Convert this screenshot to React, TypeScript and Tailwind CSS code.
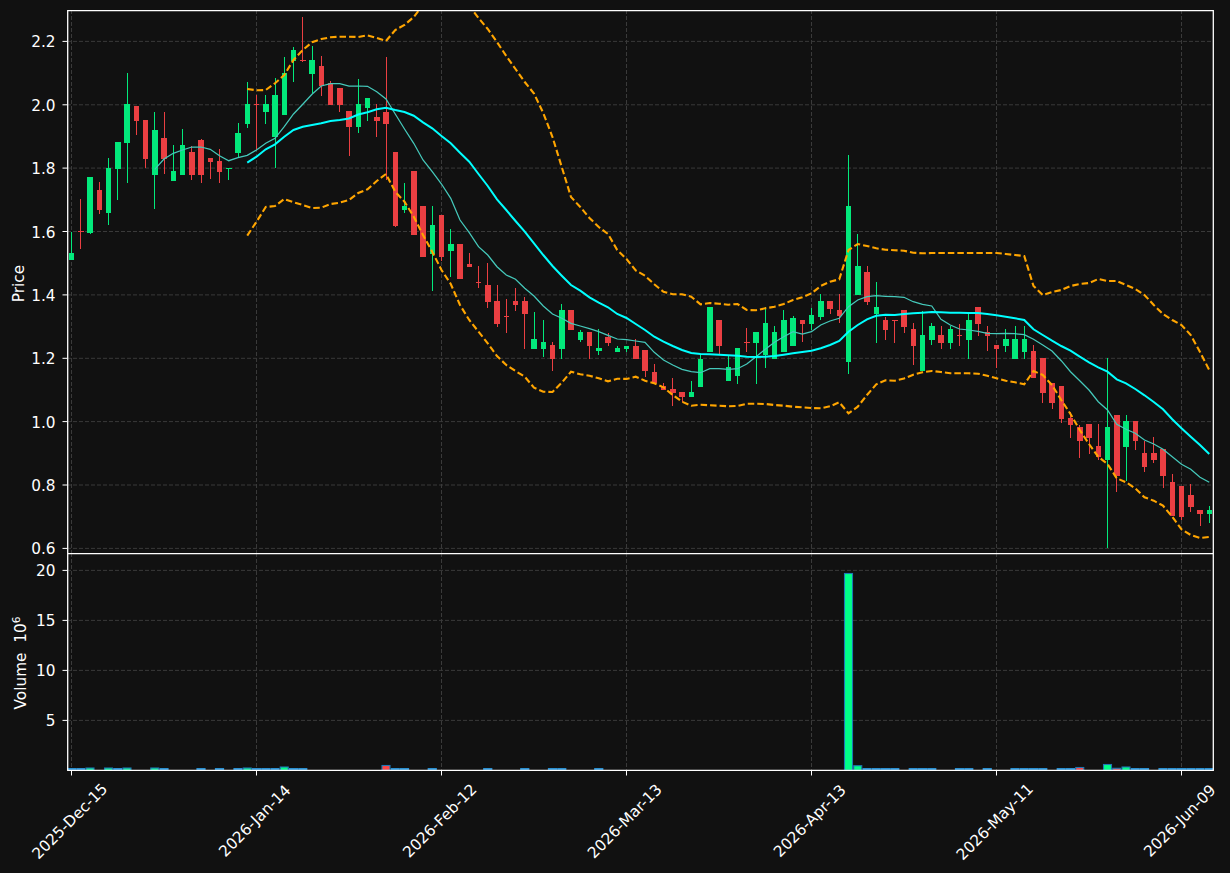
const GREEN = "#02e97b";
const RED = "#ea3f42";

// [high, bodyTop, bodyBottom, low, up?] all in page pixels
const candles: [number, number, number, number, number][] = [
  [231.7, 253, 259.7, 259.7, 1], [199.3, 231, 232, 249.3, 0], [177, 177, 232.7, 234.3, 1], [181.7, 190, 209.7, 213.7, 0],
  [158.3, 168, 212.7, 225.3, 1], [142, 142, 168.7, 199.7, 1], [73.3, 104, 142.7, 183.3, 1], [106, 106, 120.7, 134.7, 0],
  [120, 120, 158.7, 168.3, 0], [111.7, 130, 174.7, 209.3, 1], [111.7, 138, 158.7, 174.3, 0], [145.3, 171.3, 180.7, 180.7, 1],
  [129.3, 145, 174.7, 174.7, 1], [146, 152, 174.7, 180.3, 0], [139.3, 140, 174.7, 183.3, 0], [158, 158, 162, 178.7, 0],
  [149.3, 161, 171.7, 183.3, 0], [168, 168, 168.9, 180.3, 1], [123.3, 133.3, 152.7, 157.3, 1], [82.3, 104, 123.7, 128.3, 1],
  [95.3, 104, 104.9, 150, 0], [95.3, 104, 111.7, 124.3, 1], [77.7, 95, 136.7, 168.3, 1], [57.3, 73.3, 114.7, 114.7, 1],
  [47.3, 50, 61, 82.3, 1], [16.7, 60, 60.9, 62, 0], [45.7, 60, 73.7, 93.3, 1], [56.3, 66, 86, 95.7, 0],
  [80.7, 83.3, 104.7, 104.7, 0], [88, 88, 104.7, 111.7, 0], [111, 111, 126.7, 155.7, 0], [79.3, 104, 126.7, 133.3, 1],
  [98, 98, 108, 120.7, 1], [104.3, 117, 121, 136.7, 0], [57, 111.7, 123.7, 180, 0], [152, 152, 226, 227.3, 0],
  [183.3, 206, 210, 212.7, 1], [171, 171, 234.7, 234.7, 0], [206, 206, 256.7, 256.7, 0], [206, 225, 253.7, 290.7, 1],
  [215, 215, 256.7, 260.7, 0], [229.3, 244, 250.7, 276.7, 1], [244, 244, 278.7, 278.7, 0], [253.3, 264, 267, 267, 0],
  [266, 282, 282.9, 287.7, 0], [263.3, 285, 301.7, 307.7, 0], [285.3, 301, 323.7, 326.7, 0], [299.3, 316, 316.9, 332.7, 0],
  [288.3, 301, 305, 310.7, 0], [297.3, 301, 314, 348.7, 0], [312.3, 339, 348.7, 348.7, 1], [320.3, 342, 348.7, 356.7, 1],
  [342.3, 345, 358.7, 370.7, 0], [304.3, 310, 348.7, 358.7, 1], [310, 310, 329.7, 329.7, 0], [330, 332, 339.7, 341.7, 1],
  [332, 332, 345.7, 358.7, 0], [329.3, 348, 351, 354.7, 1], [332.7, 337.3, 343, 345.7, 0], [346, 348, 351.7, 351.7, 1],
  [346, 346, 349, 351.7, 1], [339.3, 346, 359, 359, 0], [350, 350, 371, 376.7, 0], [364.3, 372, 383.3, 383.3, 0],
  [383.3, 386.3, 390, 390, 0], [378.3, 389, 393, 405.7, 0], [392, 392, 397, 402, 0], [381.3, 392, 397, 397, 1],
  [355, 359, 387, 387, 1], [307, 307, 352, 352, 1], [320, 320, 345.7, 354, 0], [355, 367, 381, 381, 1],
  [348, 348, 376, 384, 1], [328.3, 342, 342.9, 351.7, 0], [332, 332, 343, 383.7, 1], [307.3, 323, 355, 367.7, 1],
  [326, 332, 359, 359, 1], [310.3, 320, 352, 352, 1], [316, 318, 346, 346, 1], [320, 320, 324, 341.7, 0],
  [308.3, 315, 324, 330, 1], [294, 301, 317, 320.3, 1], [301, 301, 309, 313.7, 0], [294, 310, 316, 322.7, 0],
  [155, 206, 362, 373.7, 1], [234.3, 266, 295, 295, 1], [266.3, 272, 302, 305, 0], [282.3, 307, 314, 342.7, 1],
  [316.7, 320, 330, 340, 0], [320, 320, 320.9, 342.7, 0], [310, 310, 327, 332.7, 0], [323.3, 329, 345.7, 365, 0],
  [310.7, 335, 371, 371, 1], [323.3, 326, 340, 345.3, 1], [326, 335, 343, 348.7, 0], [326, 329, 343, 348.7, 1],
  [324.3, 335, 335.9, 345.7, 0], [314, 320, 340, 358.7, 1], [307, 307, 324, 336, 0], [326.3, 332, 336, 350.7, 0],
  [345, 345, 349, 367.7, 0], [329.3, 339, 346, 351.7, 1], [326.3, 339, 358.7, 358.7, 1], [326.3, 339, 352, 358.7, 1],
  [345, 351, 378, 378, 0], [358, 358, 393, 402.7, 0], [383, 383, 403, 408.7, 0], [386, 386, 419, 422.7, 0],
  [412, 418, 425, 438, 0], [425, 427, 441, 457.7, 0], [424, 424, 438, 454, 0], [424, 446, 457, 460, 0],
  [358.3, 427, 460, 548.3, 1], [415, 415, 476, 492, 0], [415.3, 421, 447, 481, 1], [421, 421, 441, 450, 0],
  [441, 453, 467, 471.7, 0], [437, 453, 460, 463, 0], [449, 449, 476, 487.7, 0], [474.3, 482, 516, 516, 0],
  [486, 486, 517, 520, 0], [484.3, 495, 507, 511.7, 0], [510, 510, 514, 525.7, 0], [506, 510, 514, 522.7, 1],
];

const ma20 = [
  162.7, 156.7, 149.3, 144.3, 136.7, 130, 126.7, 125, 123.3, 121, 120, 118.5, 114.5, 112.3, 109.3, 107.7, 110, 112, 115.7,
  122.3, 128.3, 136, 143.3, 152.7, 161.7, 174, 186, 199.3, 210, 221, 231.7, 243.3, 255, 266, 275.7, 285, 290.7, 297.3,
  302.7, 307.3, 314, 318, 324, 330, 336.7, 341.7, 346, 350, 353, 354, 354.3, 354.7, 355.3, 355.7, 356.7, 357, 356.7, 356,
  354.7, 353.3, 352, 350.7, 348.3, 345, 341, 331.7, 325, 319.3, 315.7, 314.7, 315, 314, 313.3, 312.7, 312, 312.3, 312.7,
  312.7, 313, 313, 314, 315.3, 316.7, 318.3, 320, 329.3, 335, 340.7, 346, 350.7, 356.7, 362.3, 367.3, 371.7, 379.3, 383.3,
  389, 395.3, 402, 409.3, 419.3, 428.3, 436.7, 445, 454,
];

const ma10 = [
  169.3, 159, 153.3, 150, 147, 147, 149.3, 155.7, 160.7, 157.7, 155.3, 150, 143.3, 138.3, 126.7, 114, 104.3, 94.3, 86, 83.7,
  83.7, 86, 86, 86.3, 91.7, 99, 114, 129, 143.3, 160, 171.7, 184, 198.3, 220, 232.7, 246.7, 255, 266.7, 275, 279.3, 288.3,
  296, 306, 314, 318.3, 323.3, 326, 328.7, 331.7, 335.3, 339, 339.7, 341, 342.3, 352.3, 360, 365, 369.3, 371.7, 372.7,
  368.7, 368.7, 369.3, 368.7, 364, 356.7, 349.3, 342.3, 336.7, 331.7, 334, 331.7, 325, 321, 318.3, 306.7, 300, 296.7,
  295.7, 296.3, 296.7, 297.3, 301.7, 304.3, 306, 319.3, 325, 329, 330, 331.3, 333.3, 333.7, 333.3, 333.7, 334.7, 339.3,
  345, 351, 360.7, 371.7, 380.7, 390, 401.7, 410, 424.3, 429.3, 433.3, 440, 444, 449.3, 456.7, 464.3, 469.3, 477.3, 482.3,
];

const upper = [
  89, 90.3, 90, 83.3, 75, 60, 50, 42.3, 39, 37.3, 36.7, 36.7, 37, 35.3, 38, 41, 30, 25, 17, 5, -10, -20, -20, -10, 6, 18, 29,
  42, 56, 69, 82, 93.5, 113, 137, 167, 197, 207, 218, 227, 234, 250, 259, 270.5, 275.7, 284.3, 291.7, 294.3, 294.3, 296.7,
  304.3, 303, 303.7, 304.7, 304, 310, 310.3, 308.3, 306.7, 304, 300, 297.3, 293.3, 286, 281.7, 279.3, 250, 244, 246, 248.3,
  249.7, 250.3, 250.7, 252.7, 253.3, 253, 253, 253, 253, 253, 253, 253, 253, 254, 255, 256, 286, 295, 292, 290, 286, 284,
  283, 279, 281, 281, 285, 289, 295, 305, 314, 320, 325, 335, 352, 370,
];

const lower = [
  235.7, 221.7, 207, 206, 199, 202.3, 205, 208, 207.7, 204, 202.7, 200, 193, 189.3, 181, 174, 191.7, 201.7, 216.7, 235, 251.7,
  270, 284, 305, 320, 331.7, 343.3, 356, 365, 371, 376.7, 387.7, 391.7, 392, 382.7, 371.7, 374.3, 375.7, 378.3, 381.3, 378.7,
  378.9, 376.7, 380.7, 383.3, 387.3, 395, 401.7, 405.7, 404.7, 405.3, 405.7, 406.3, 406, 403.7, 403.7, 404, 405, 405.7,
  406.7, 407.3, 408, 408.3, 406.3, 402.3, 413.3, 406.7, 395, 384.3, 380.3, 380.7, 378.5, 374.7, 372.3, 371, 372, 373.3,
  373.3, 373.3, 373.7, 375.7, 378.3, 380.7, 382.3, 384.3, 371, 375, 385, 400, 414, 430, 444, 456.7, 464, 478.3, 482.3,
  488.3, 497.3, 500.7, 505.7, 516.7, 529.3, 535, 538, 537,
];

// volume bars that rise above the axis line: index -> top y
const tallVolumes: Record<number, number> = {
  2: 768, 4: 768, 6: 768, 9: 768, 19: 768, 23: 767, 34: 765.5, 84: 573.5, 85: 765.7, 109: 767.5, 112: 764.5, 113: 768.3, 114: 767,
};
const thinVolumes = [
  0, 1, 5, 10, 14, 16, 18, 20, 21, 22, 24, 25, 35, 36, 39, 45, 49, 52, 53, 57, 86, 87, 88, 89, 91, 92, 93, 96, 97, 99, 102,
  103, 104, 105, 107, 108, 115, 116, 118, 119, 120, 121, 122, 123,
];

const priceTicks = [
  { label: "2.2", y: 41.4 }, { label: "2.0", y: 104.8 }, { label: "1.8", y: 168.1 }, { label: "1.6", y: 231.5 },
  { label: "1.4", y: 294.9 }, { label: "1.2", y: 358.3 }, { label: "1.0", y: 421.6 }, { label: "0.8", y: 485 }, { label: "0.6", y: 548.4 },
];
const volumeTicks = [
  { label: "20", y: 570.4 }, { label: "15", y: 620.4 }, { label: "10", y: 670.4 }, { label: "5", y: 720.4 },
];
const dateTicks = [
  { label: "2025-Dec-15", x: 71.5, cy: 821 }, { label: "2026-Jan-14", x: 256.5, cy: 820.5 }, { label: "2026-Feb-12", x: 441.5, cy: 820.5 },
  { label: "2026-Mar-13", x: 626.5, cy: 821 }, { label: "2026-Apr-13", x: 811.5, cy: 820.5 }, { label: "2026-May-11", x: 996.5, cy: 821.5 },
  { label: "2026-Jun-09", x: 1181.5, cy: 820.5 },
];

const xAt = (i: number) => 71.5 + 9.25 * i;

const linePoints = (ys: number[], start: number) =>
  ys.map((y, k) => `${xAt(start + k).toFixed(2)},${y}`).join(" ");

const GridV = ({ top, bottom }: { top: number; bottom: number }) => (
  <>
    {dateTicks.map((t) => (
      <line key={t.x} x1={t.x} x2={t.x} y1={top} y2={bottom} stroke="#3a3a3a" strokeWidth={1} strokeDasharray="4 2" />
    ))}
  </>
);

const GridH = ({ ticks }: { ticks: { y: number }[] }) => (
  <>
    {ticks.map((t) => (
      <line key={t.y} x1={67} x2={1214} y1={t.y} y2={t.y} stroke="#3a3a3a" strokeWidth={1} strokeDasharray="4 2" />
    ))}
  </>
);

const PriceChart = () => (
  <svg viewBox="67 10 1147 543" className="block w-[1147px] h-[543px]">
    <GridV top={10} bottom={553} />
    <GridH ticks={priceTicks} />
    {candles.map(([hi, top, bot, lo, up], i) => {
      const c = up ? GREEN : RED;
      return (
        <g key={i} shapeRendering="crispEdges">
          <rect x={xAt(i) - 0.5} y={hi} width={1} height={lo - hi} fill={c} />
          <rect x={xAt(i) - 2.75} y={top} width={5.5} height={Math.max(bot - top, 1)} fill={c} />
        </g>
      );
    })}
    <polyline points={linePoints(ma10, 9)} fill="none" stroke="#45c9bb" strokeWidth={1.25} />
    <polyline points={linePoints(ma20, 19)} fill="none" stroke="#00ffff" strokeWidth={2} />
    <polyline points={linePoints(upper, 19)} fill="none" stroke="#ffa500" strokeWidth={2.1} strokeDasharray="6.5 3" />
    <polyline points={linePoints(lower, 19)} fill="none" stroke="#ffa500" strokeWidth={2.1} strokeDasharray="6.5 3" />
    <path d="M67.7 553V10.7H1213.3V553" fill="none" stroke="#fff" strokeWidth={1.3} />
  </svg>
);

const VolumeChart = () => (
  <svg viewBox="67 553 1147 218" className="block w-[1147px] h-[218px]">
    <GridV top={553} bottom={771} />
    <GridH ticks={volumeTicks} />
    {thinVolumes.map((i) => (
      <rect key={i} x={xAt(i) - 4.6} y={768} width={9.2} height={2} fill="#2a8fd0" />
    ))}
    {Object.entries(tallVolumes).map(([k, top]) => {
      const i = Number(k);
      return (
        <rect
          key={k}
          x={xAt(i) - 4}
          y={top}
          width={8}
          height={770.3 - top}
          fill={candles[i][4] ? "#00ff88" : "#ff4444"}
          stroke="#1f77b4"
          strokeWidth={1.1}
        />
      );
    })}
    <path d="M67.7 553.6H1213.3V770.3H67.7Z" fill="none" stroke="#fff" strokeWidth={1.3} />
  </svg>
);

const YAxis = ({
  ticks,
  top,
  height,
  children,
}: {
  ticks: { label: string; y: number }[];
  top: number;
  height: number;
  children: React.ReactNode;
}) => (
  <svg viewBox={`0 ${top} 67 ${height}`} className="block w-[67px] shrink-0 overflow-visible" style={{ height }}>
    {ticks.map((t) => (
      <g key={t.label}>
        <line x1={62.5} x2={67} y1={t.y} y2={t.y} stroke="#fff" strokeWidth={1} />
        <text x={55.5} y={t.y + 6} textAnchor="end" className="fill-white text-[15.3px]">
          {t.label}
        </text>
      </g>
    ))}
    {children}
  </svg>
);

const DateAxis = () => (
  <svg viewBox="0 771 1230 102" className="block w-[1230px] h-[102px]">
    {dateTicks.map((t) => (
      <g key={t.label}>
        <line x1={t.x} x2={t.x} y1={770} y2={775.5} stroke="#fff" strokeWidth={1} />
        <text
          x={t.x - 2}
          y={t.cy + 5.6}
          textAnchor="middle"
          transform={`rotate(-45 ${t.x - 2} ${t.cy})`}
          className="fill-white text-[15.3px]"
        >
          {t.label}
        </text>
      </g>
    ))}
  </svg>
);

export default function App() {
  return (
    <div className="w-[1230px] h-[873px] overflow-hidden bg-[#111111] pt-[10px] flex flex-col font-['DejaVu_Sans',sans-serif]">
      <div className="flex">
        <YAxis ticks={priceTicks} top={10} height={543}>
          <text x={24} y={283.5} textAnchor="middle" transform="rotate(-90 24 283.5)" className="fill-white text-[15.3px]">
            Price
          </text>
        </YAxis>
        <PriceChart />
      </div>
      <div className="flex">
        <YAxis ticks={volumeTicks} top={553} height={218}>
          <text x={26} y={663} textAnchor="middle" transform="rotate(-90 26 663)" className="fill-white text-[15.3px] whitespace-pre">
            {"Volume  10"}
            <tspan dy={-6} className="text-[10.7px]">
              6
            </tspan>
          </text>
        </YAxis>
        <VolumeChart />
      </div>
      <DateAxis />
    </div>
  );
}
